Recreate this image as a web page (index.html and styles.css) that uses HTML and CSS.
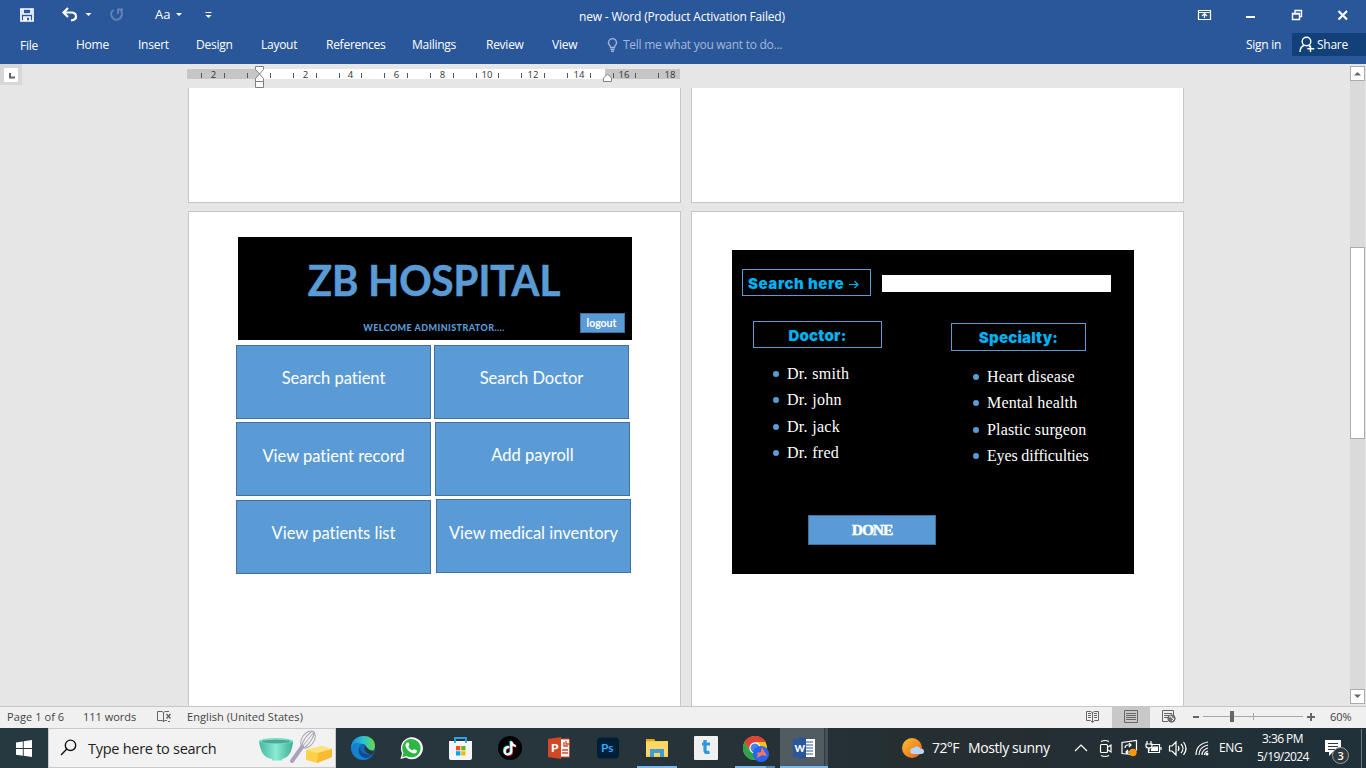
FILE: index.html
```html
<!DOCTYPE html>
<html lang="en">
<head>
<meta charset="utf-8">
<title>new - Word</title>
<link rel="stylesheet" href="styles.css">
</head>
<body>
<header class="ribbon">
  <div class="titlebar">
    <svg class="quick" width="230" height="31" viewBox="0 0 230 31">
      <path d="M21 9h12v12H21zM23 9v5h8V9M24 21v-4h6v4" fill="none" stroke="#fff" stroke-width="1.7"/><path d="M25 18h2v3h-2z" fill="#fff"/>
      <path d="M68 8l-4.500 4.500 4.500 4.500M64 12.500h8q4 .5 4 4t-5 4" fill="none" stroke="#fff" stroke-width="2.200"/>
      <path d="M85.500 13h6l-3 3z" fill="#fff"/>
      <path d="M113.500 10q-4 3-1.500 7t6 2.500 4-5-3-5.500M118 14V9.500h5" fill="none" stroke="#6384b8" stroke-width="1.800"/>
      <path d="M176 13h6l-3 3zM205.500 15h6l-3 3z" fill="#fff"/><path d="M205.500 12.500h6" stroke="#fff"/>
    </svg>
    <span class="case">Aa</span>
    <span class="doc-title">new - Word (Product Activation Failed)</span>
    <svg class="winctl" width="166" height="31" viewBox="1200 0 166 31" fill="none" stroke="#fff">
      <path d="M1198.500 10.500h12v9h-12zM1198 12.500h13M1204.500 18v-4M1202 16l2.500-2.500 2.500 2.500" stroke-width="1.200"/>
      <path d="M1246 17h9" stroke-width="2"/>
      <path d="M1292.500 13.500h7v6h-7zM1292 14h8M1295 13v-2.500h6.500v6H1300" stroke-width="1.400"/>
      <path d="M1338.500 11l8.500 8.500m0-8.500l-8.500 8.500" stroke-width="2.200"/>
    </svg>
  </div>
  <nav class="tabs">
    <span class="file">File</span><span>Home</span><span>Insert</span><span>Design</span><span>Layout</span><span>References</span><span>Mailings</span><span>Review</span><span>View</span>
    <svg width="12" height="16" viewBox="0 0 12 16" fill="none" stroke="#a3b8d8" stroke-width="1.300"><path d="M3.500 10.500Q3.500 9 2 7.500A4 4 0 1 1 9 7.500Q7.500 9 7.500 10.500zM3.500 12.500h4M4 14.300h3"/></svg>
    <span class="tell">Tell me what you want to do...</span>
    <span class="signin">Sign in</span>
    <span class="share"><svg width="16" height="17" viewBox="0 0 16 17" fill="none" stroke="#fff" stroke-width="1.400"><circle cx="7.500" cy="5.500" r="4.300"/><path d="M1 16Q1 11 5 9.500M9.500 9l1.500 2M11.500 9.500v6.500M8.300 12.700h7"/></svg>Share</span>
  </nav>
</header>
<main class="work">
  <div class="gutter"><div class="tabsel"><svg width="14" height="14" viewBox="0 0 14 14"><path d="M6 5v4.500h5" fill="none" stroke="#666" stroke-width="2"/></svg></div></div>
  <div class="desk">
    <svg class="ruler" width="494" height="24" viewBox="187 64 494 24">
      <path d="M187 69h493v10H187z" fill="#c6c6c6"/><path d="M260 69h345v10H260z" fill="#fff"/>
      <path d="M201.500 73v5M224.500 73v5M247.500 73v5M270.500 73v5M293.500 73v5M316.500 73v5M339.500 73v5M361.500 73v5M384.500 73v5M407.500 73v5M430.500 73v5M453.500 73v5M476.500 73v5M498.500 73v5M521.500 73v5M544.500 73v5M567.500 73v5M590.500 73v5M613.500 73v5M635.500 73v5M658.500 73v5" stroke="#555"/>
      <g class="nums"><text x="213.500" y="78">2</text><text x="305.500" y="78">2</text><text x="350.500" y="78">4</text><text x="396.500" y="78">6</text><text x="442.500" y="78">8</text><text x="487" y="78">10</text><text x="533" y="78">12</text><text x="579" y="78">14</text><text x="624" y="78">16</text><text x="670" y="78">18</text></g>
      <g fill="#fff" stroke="#808080"><path d="M255.500 66.500h8v3l-4 4.500-4-4.500zM259.500 74l4 4.500v3h-8v-3zM255.500 81.500h8v6h-8zM607.500 74l4 4v3.500h-8V78z"/></g>
    </svg>
    <div class="pages">
      <section class="page top"></section><section class="page top"></section>
      <section class="page">
        <div class="banner"><h1>ZB HOSPITAL</h1><p>WELCOME ADMINISTRATOR....</p><button class="logout">logout</button></div>
        <button class="tile t1">Search patient</button><button class="tile t2">Search Doctor</button>
        <button class="tile t3">View patient record</button><button class="tile t4">Add payroll</button>
        <button class="tile t5">View patients list</button><button class="tile t6">View medical inventory</button>
      </section>
      <section class="page">
        <div class="panel">
          <div class="label search">Search here <svg width="10" height="9" viewBox="0 0 10 9" fill="none" stroke="#00b0f0" stroke-width="1.100"><path d="M0 4.500h9M5.500 1L9 4.500 5.500 8"/></svg></div>
          <div class="field"></div>
          <div class="label doctor">Doctor:</div><div class="label specialty">Specialty:</div>
          <ul class="list docs"><li>Dr. smith</li><li>Dr. john</li><li>Dr. jack</li><li>Dr. fred</li></ul>
          <ul class="list specs"><li>Heart disease</li><li>Mental health</li><li>Plastic surgeon</li><li class="long">Eyes difficulties</li></ul>
          <button class="done">DONE</button>
        </div>
      </section>
    </div>
  </div>
  <div class="scroll"><span class="arrow"><svg width="9" height="5" viewBox="0 0 9 5"><path d="M1 4.500L4.500 1 8 4.500z" fill="#666"/></svg></span><div class="track"><div class="thumb"></div></div><span class="arrow"><svg width="9" height="5" viewBox="0 0 9 5"><path d="M1 .5L4.500 4 8 .5z" fill="#666"/></svg></span></div>
</main>
<footer class="status">
  <span class="s-page">Page 1 of 6</span><span class="s-words">111 words</span>
  <svg class="s-proof" width="16" height="14" viewBox="0 0 16 14" fill="none" stroke="#666"><path d="M7.500 2.500L6 1.500H1.500v9H6l1.500 1 1.500-1h2M7.500 2.500v9M7.500 2.500L9 1.500h4M12 11.500h2"/><path d="M10.500 4l4 4.500m0-4.500l-4 4.500" stroke-width="1.500"/></svg>
  <span class="s-lang">English (United States)</span>
  <svg class="views" width="250" height="21" viewBox="1080 707 250 21" fill="none" stroke="#666">
    <path d="M1092.500 713v9M1086.500 711.500h4l2 1 2-1h4v9h-4l-2 2-2-2h-4zM1088 713.500h3M1088 715.500h3M1088 717.500h3M1094 713.500h3M1094 715.500h3M1094 717.500h3"/>
    <path d="M1112 707h38v21h-38z" fill="#c8c8c8" stroke="none"/><path d="M1124.500 710.500h13v12h-13zM1126 713.500h10M1126 715.500h10M1126 717.500h10M1126 719.500h10"/>
    <path d="M1168 721.500h-5.500v-11h11v5M1164 713.500h8M1164 715.500h6M1164 717.500h4"/><circle cx="1171.500" cy="718.500" r="3.700" fill="#777"/><path d="M1169 717l2-1 1 2 2 1-2 2" stroke="#eee"/>
    <path d="M1193 717h6" stroke-width="2"/><path d="M1203 716.500h100M1253.500 713v7" stroke="#a6a6a6"/><path d="M1230 711h4v11h-4z" fill="#666" stroke="none"/><path d="M1307 717h8M1311 713v8" stroke-width="2"/>
  </svg>
  <span class="zoom">60%</span>
</footer>
<div class="taskbar">
  <div class="start"><svg width="17" height="17" viewBox="0 0 17 17" fill="#fff"><path d="M0 2.400l6.800-1v6.700H0zM7.700 1.200L16 0v8.100H7.700zM0 9h6.800v6.700L0 14.700zM7.700 9H16v8l-8.300-1.200z"/></svg></div>
  <div class="find">
    <svg width="17" height="17" viewBox="0 0 17 17" fill="none" stroke="#111" stroke-width="1.400"><circle cx="10.500" cy="6.300" r="5.200"/><path d="M6.800 10L1 16"/></svg>
    <span>Type here to search</span>
    <svg class="bake" width="76" height="36" viewBox="258 730 76 36">
      <defs><linearGradient id="bowl"><stop stop-color="#43b79d"/><stop offset=".5" stop-color="#8bead3"/><stop offset="1" stop-color="#3fad95"/></linearGradient></defs>
      <path d="M259 741q2 17 13 18v1.500h10V759q10-2 11-18z" fill="url(#bowl)"/><ellipse cx="276" cy="741" rx="17" ry="3" fill="#7adfc7"/><ellipse cx="276" cy="741.500" rx="14.500" ry="1.800" fill="#4aa894"/>
      <path d="M292 761l10-14" stroke="#aaa1c0" stroke-width="4" stroke-linecap="round"/>
      <g fill="none" stroke="#a9a6b5" stroke-width="1"><ellipse cx="308" cy="739.500" rx="6" ry="9.500" transform="rotate(35 308 739.500)"/><ellipse cx="308" cy="739.500" rx="3" ry="9.500" transform="rotate(35 308 739.500)"/><path d="M302 747l12-15"/></g>
      <path d="M306 750l16-4 10 3v8l-15 6-11-3z" fill="#ffd049"/><path d="M306 750l16-4 10 3-14 4z" fill="#ffe27a"/><path d="M318 753l14-4v8l-15 6z" fill="#f6bb31"/>
    </svg>
  </div>
  <div class="apps">
    <div class="app"><svg width="24" height="24" viewBox="0 0 24 24"><defs><linearGradient id="edge" x2="1"><stop stop-color="#168be0"/><stop offset=".5" stop-color="#2bc2d1"/><stop offset="1" stop-color="#67d947"/></linearGradient></defs><circle cx="12" cy="12" r="12" fill="#1268b8"/><path d="M0 12C0-3 24-4 24 10c0 6-7 7-10 4 3-2 1-6-2-6-6-1-10 2-12 4z" fill="url(#edge)"/><path d="M0 12c2-6 8-6 10-3-6 4 0 13 12 10-7 8-20 6-22-7z" fill="#1682cf"/><path d="M9 11c0 6 6 9 13 7 0 0-3 4-7 4-7-1-9-7-6-11z" fill="#134a91"/><path d="M13.800 14c-1.500-1 .6-1.500 0-4 3 1 2 4 9.200 5l-1 3q-6 1-8.200-4z" fill="#29363e"/></svg></div>
    <div class="app"><svg width="24" height="24" viewBox="0 0 24 24"><path d="M.5 23l1.600-5.800A11 11 0 1 1 6 21.500z" fill="#fff"/><path d="M2.200 21.200l1.200-4.400A9.200 9.200 0 1 1 6.500 20z" fill="#2bb741"/><path d="M7 6.500q-2 1-1.500 3.500 2 6 8.500 7.500 3 0 3-3l-3-1.500-1.500 1.500q-3-1-4.300-4l1.300-1.500-1-2.500z" fill="#fff"/></svg></div>
    <div class="app"><svg width="24" height="24" viewBox="0 0 24 24"><path d="M0 5h23v17q0 2-2 2H2q-2 0-2-2z" fill="#f5f5f5"/><path d="M6 7V2h11v5" fill="none" stroke="#25a7e5" stroke-width="1.800"/><path d="M7 10h4.300v4.300H7z" fill="#f25022"/><path d="M12.200 10h4.300v4.300h-4.300z" fill="#67b51f"/><path d="M7 15.200h4.300v4.300H7z" fill="#00a4ef"/><path d="M12.200 15.200h4.300v4.300h-4.300z" fill="#ffb900"/></svg></div>
    <div class="app"><svg width="24" height="24" viewBox="0 0 24 24"><circle cx="12" cy="12" r="12" fill="#000"/><g fill="none" stroke-width="2"><path d="M10.500 10.500q-4.500 0-4.500 4t3.500 3.500 3-4V5q1 4 4.500 4.500" stroke="#25f4ee"/><path d="M12 11.500q-4.500 0-4.500 4t3.500 3.500 3-4V6q1 4 4.500 4.500" stroke="#fe2c55"/><path d="M11.300 11q-4.500 0-4.500 4t3.500 3.300 3-4V5.500q1 4 4.500 4.500" stroke="#fff"/></g></svg></div>
    <div class="app"><svg width="24" height="24" viewBox="0 0 24 24"><path d="M12 3h10.500v18H12z" fill="#fff" stroke="#d24726"/><path d="M15 14h6M15 17h6M17 6v4h4M19 5v3h3" stroke="#d24726" fill="none" stroke-width="1.300"/><path d="M1 3l13-2v22L1 21z" fill="#d24726"/><text class="glyph" x="4" y="16">P</text></svg></div>
    <div class="app"><svg width="24" height="24" viewBox="0 0 24 24"><rect x="1" y="1.500" width="22" height="21" rx="4" fill="#001e36"/><text class="ps" x="5" y="16">Ps</text></svg></div>
    <div class="app open"><svg width="24" height="24" viewBox="0 0 24 24"><path d="M1 3h8l1 2h13v16H1z" fill="#ffcf48"/><path d="M1 3h8l1 2H1z" fill="#e9a313"/><path d="M1 6h22v13H1z" fill="#ffd765"/><path d="M5 13h14v8h-4v-4H9v4H5z" fill="#3e9ad8"/></svg></div>
    <div class="app"><svg width="24" height="24" viewBox="0 0 24 24"><rect width="24" height="24" rx="1" fill="#f0f0f0"/><path d="M11 4v10.500q0 3 4.500 1.500M8 8h8" fill="none" stroke="#2d98db" stroke-width="3.200"/></svg></div>
    <div class="app open chrome"><svg width="27" height="26" viewBox="0 0 27 26"><circle cx="12" cy="12" r="12" fill="#fbc116"/><path d="M1.600 6A12 12 0 0 1 22.400 6H12L7 15z" fill="#df4335"/><path d="M1.600 6A12 12 0 0 0 12 24l5-9H7z" fill="#2ba24c"/><circle cx="12" cy="12" r="5.700" fill="#fff"/><circle cx="12" cy="12" r="4.500" fill="#4385ee"/><circle cx="18" cy="18" r="8" fill="#2864ed"/><path d="M19 11l5 9-5-1-5 3 1-4-2-1 5-1z" fill="#ff755f"/></svg></div>
    <div class="app active"><svg width="24" height="24" viewBox="0 0 24 24"><path d="M12 3h11v18H12z" fill="#fff"/><path d="M14 6h7M14 9h7M14 12h7M14 15h7M14 18h7" stroke="#2b579a" stroke-width="1.200"/><path d="M1 3l13-2v22L1 21z" fill="#2b579a"/><text class="glyph w" x="2.500" y="16">W</text></svg></div>
  </div>
  <div class="weather"><svg width="24" height="24" viewBox="0 0 24 24"><defs><linearGradient id="sun" x2="1" y2="1"><stop stop-color="#f6c230"/><stop offset="1" stop-color="#ed5f18"/></linearGradient></defs><circle cx="11" cy="12" r="10" fill="url(#sun)"/><path d="M12 18a3 3 0 0 1 .5-6 4 4 0 0 1 7 1 2.600 2.600 0 1 1 1 5z" fill="#b7d4fb"/></svg><span class="temp">72°F</span><span class="sky">Mostly sunny</span></div>
  <svg class="tray" width="140" height="40" viewBox="1072 728 140 40" fill="none" stroke="#fff" stroke-width="1.200">
    <path d="M1075 751l6-6 6 6"/>
    <path d="M1101.500 744.500h5q1 0 1 1v6q0 1-1 1h-5q-1 0-1-1v-6q0-1 1-1zM1108 747l3-2v7l-3-2M1101 741.500q4-2 8 0M1101 755.500q4 2 8 0"/>
    <path d="M1132 754.500l-10-1v-11l14.500-2v10M1125 748q0-3 3-3h3M1129 743l2 2-2 2M1132 749q0 3-3 3h-3M1128 754l-2-2 2-2"/><circle cx="1133" cy="752.500" r="3.700" fill="#ff9800" stroke="none"/>
    <path d="M1150.500 744.500h9v8h-11v-4M1161 747v3M1147 741v3M1151 741v3M1146 744h6v2q0 2-3 2t-3-2zM1149 748v3"/><path d="M1153 746.500h5v4.500h-7v-2z" fill="#fff" stroke="none"/>
    <path d="M1169.500 746h2.500l4-4v13l-4-4h-2.500zM1178 746q2 2.500 0 5M1181 744q4 4.500 0 9M1183.500 742q5 6.500 0 13"/>
    <path d="M1196 755q0-11 12-13M1199 755q0-8 9-10M1202 755q0-5 6-7M1204.500 755q0-3 3.500-4"/><circle cx="1207" cy="754" r="1.500" fill="#fff" stroke="none"/>
  </svg>
  <span class="eng">ENG</span>
  <div class="clock"><span>3:36 PM</span><span class="date">5/19/2024</span></div>
  <svg class="notify" width="44" height="40" viewBox="1322 728 44 40"><path d="M1325 740h16v12h-8l-4 4v-4h-4z" fill="#fff"/><path d="M1328 743.500h10M1328 746.500h10M1328 749.500h7" stroke="#2a3942"/><circle cx="1340.500" cy="755.500" r="8" fill="#31383b" stroke="#9aa1a4"/><text x="1337.500" y="759.500">3</text><path d="M1361.500 729v39" stroke="#6c777c"/></svg>
</div>
</body>
</html>
```
FILE: styles.css
```css
*{box-sizing:border-box}
body{margin:0;width:1366px;height:768px;overflow:hidden;display:flex;flex-direction:column;font-family:"Open Sans","Noto Sans",sans-serif;font-size:12px;background:#e6e6e6}
svg{display:block;flex:none}
span{white-space:nowrap}
button{font:inherit;padding:0;margin:0}
.ribbon{height:64px;background:#2a579a;color:#fff;flex:none}
.titlebar{height:31px;display:flex;position:relative}
.case{position:absolute;left:155px;top:5px;font-size:13px;line-height:18px}
.doc-title{margin-left:349px;line-height:33px;letter-spacing:-.18px;width:250px}
.winctl{margin-left:auto;overflow:visible}
.tabs{height:33px;display:grid;grid-template-columns:56px 62px 58px 65px 65px 86px 74px 66px 55px 16px 623px 46px 74px;padding-left:20px;line-height:27px;letter-spacing:-.26px}
.tabs .file{padding-top:1px}
.tabs svg{margin-top:6px}
.tell{color:#a3b8d8;letter-spacing:-.27px}
.share{background:#124078;height:23px;margin-top:2px;display:flex;gap:2px;padding-left:7px;line-height:23px}
.tabs .share svg{margin-top:3px}
.work{flex:1;display:flex;min-height:0}
.gutter{width:187px;flex:none}
.tabsel{width:22px;height:21px;background:#d7d7d7;padding:4px}
.tabsel svg{background:#fff}
.desk{flex:1;overflow:hidden}
.nums{font-size:9.500px;fill:#333;text-anchor:middle;font-family:"Open Sans",sans-serif}
.pages{display:grid;grid-template-columns:493px 493px;grid-template-rows:115px 500px;gap:8px 10px;padding-left:1px}
.page{background:#fff;border:1px solid #c6c6c6;position:relative}
.page.top{border-top:0}
.banner{position:absolute;left:49px;top:25px;width:394px;height:103px;background:#000;color:#5b9bd5;font-family:Lato,sans-serif;text-align:center}
.banner h1{margin:0;font-size:42px;line-height:50px;padding:18px 2px 0 0;font-weight:700;transform:scaleX(.955);-webkit-text-stroke:.6px #5b9bd5}
.banner p{margin:17px 2px 0 0;font-size:9px;line-height:12px;font-weight:900;letter-spacing:.43px}
.logout{position:absolute;left:342px;top:76px;width:45px;height:20px;background:#5b9bd5;border:1px solid #41719c;color:#fff;font-size:10.500px;font-weight:700;line-height:18px;padding-right:2px}
.tile{position:absolute;width:195px;height:74px;border:1px solid #41719c;background:#5b9bd5;color:#fff;font:400 16.500px/20px Lato,sans-serif;padding-bottom:9px;font-variant-ligatures:none}
.t1{left:47px;top:133px}.t2{left:245px;top:133px}
.t3{left:47px;top:210px;padding-bottom:7px}.t4{left:246px;top:210px}
.t5{left:47px;top:288px}.t6{left:247px;top:287px;padding-bottom:7px}
.panel{position:absolute;left:40px;top:38px;width:402px;height:324px;background:#000;color:#fff}
.label{position:absolute;border:1px solid #5b9bd5;color:#00b0f0;font:900 15px/27px Inter,sans-serif;text-align:center;letter-spacing:.2px}
.search{left:10px;top:19px;width:129px;height:27px;display:flex;align-items:center;gap:5px;padding:2px 0 0 5px;letter-spacing:.57px}
.search svg{margin-top:2px}
.field{position:absolute;left:150px;top:25px;width:229px;height:17px;background:#fff}
.doctor{left:21px;top:71px;width:129px;height:27px}
.specialty{left:219px;top:73px;width:135px;height:28px}
.list{position:absolute;margin:0;padding:0;list-style:none;font:16px/26.400px "Liberation Serif",serif;font-variant-ligatures:none}
.list li{display:flex;align-items:center;gap:8px}
.list li::before{content:"";width:6px;height:6px;border-radius:50%;background:#5b9bd5;margin-bottom:1px}
.docs{left:41px;top:111px;letter-spacing:.3px}
.specs{left:241px;top:114px;letter-spacing:.15px}
.long{letter-spacing:-.15px}
.done{position:absolute;left:76px;top:265px;width:128px;height:30px;background:#5b9bd5;border:1px solid #41719c;color:#fff;font:700 15.500px/28px "Liberation Serif",serif;letter-spacing:-1.1px;-webkit-text-stroke:.4px #fff}
.scroll{width:16px;display:flex;flex-direction:column;padding:2px 1px 2px 0}
.arrow{width:15px;height:15px;background:#fff;border:1px solid #ababab;display:flex;align-items:center;justify-content:center}
.track{flex:1;background:#dadada;padding-top:166px}
.thumb{height:192px;background:#fff;border:1px solid #ababab}
.status{height:22px;flex:none;background:#f0f0f0;border-top:1px solid #c6c6c6;color:#444;display:flex;line-height:20px;font-size:11px}
.s-page{width:76px;margin-left:7px;letter-spacing:.08px}
.s-words{width:73px}
.s-proof{margin-top:3px;width:16px;margin-right:15px}
.s-lang{width:893px;letter-spacing:.07px}
.zoom{letter-spacing:-.1px}
.taskbar{height:40px;flex:none;background:linear-gradient(90deg,#263840,#27353c 40%,#252e31 72%,#20313a);display:flex;color:#fff}
.start{width:48px;padding:12px 16px}
.find{width:288px;background:#f2f2f2;border:1px solid #c9c9c9;display:flex;color:#222;font-size:14.500px;line-height:39px;letter-spacing:-.27px;padding-left:11px}
.find>svg{margin-top:10px}
.find span{margin-left:11px;width:170px}
.find .bake{margin-top:1px}
.apps{display:grid;grid-template-columns:repeat(10,49px);padding-left:2px;width:493px}
.app{height:40px;padding:8px 0 0 13px}
.app.open{background:linear-gradient(#76b9ed,#76b9ed) 5px 38px/40px 2px no-repeat}
.app.chrome{background:linear-gradient(#76b9ed,#76b9ed) 5px 38px/31px 2px no-repeat,linear-gradient(#5687b0,#5687b0) 36px 38px/9px 2px no-repeat}
.app.active{background:linear-gradient(#76b9ed,#76b9ed) 0 38px/48px 2px no-repeat,linear-gradient(90deg,#515c62 44px,#303b41 44px,#303b41 45px,#465157 45px);margin-left:1px;padding-left:12px;width:48px}
.glyph{font:900 12px Lato,sans-serif;fill:#fff}
.glyph.w{font-size:10px}
.ps{font:700 12px Lato,sans-serif;fill:#31a8ff}
.weather{display:flex;width:171px;margin-left:72px;font-size:14px;line-height:40px}
.weather svg{margin-top:8px;margin-right:7px}
.temp{width:36px;letter-spacing:-.6px}
.sky{letter-spacing:-.4px}
.eng{width:37px;padding-left:7px;line-height:40px;letter-spacing:-.3px}
.clock{width:69px;display:flex;flex-direction:column;text-align:center;padding:2px 0 0 0;margin:0 5px 0 -1px;line-height:18px;letter-spacing:-.55px}
.clock span:first-child{padding-right:4px}
.clock .date{padding-right:3px}
.clock{margin:0 3px 0 1px}
.notify text{font:600 11px "Open Sans",sans-serif;fill:#fff}
```
